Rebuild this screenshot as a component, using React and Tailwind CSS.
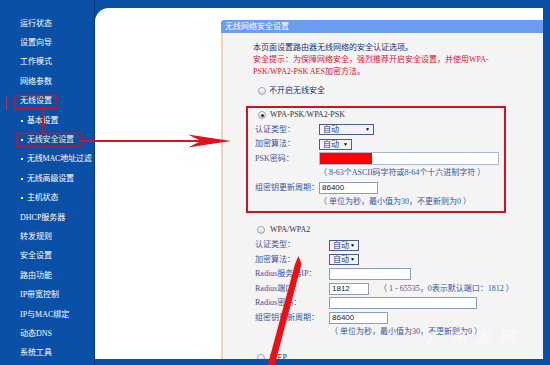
import React from "react";

const side = [
  ["运行状态", 0],
  ["设置向导", 0],
  ["工作模式", 0],
  ["网络参数", 0],
  ["无线设置", 0],
  ["基本设置", 1],
  ["无线安全设置", 2],
  ["无线MAC地址过滤", 1],
  ["无线高级设置", 1],
  ["主机状态", 1],
  ["DHCP服务器", 0],
  ["转发规则", 0],
  ["安全设置", 0],
  ["路由功能", 0],
  ["IP带宽控制", 0],
  ["IP与MAC绑定", 0],
  ["动态DNS", 0],
  ["系统工具", 0],
];

function Radio({ checked }) {
  return (
    <span className="relative w-[8px] h-[8px] rounded-full border border-[#9aa3b0] bg-[linear-gradient(#ffffff,#d6d9de)] shrink-0 flex items-center justify-center">
      {checked && <span className="w-[3px] h-[3px] rounded-full bg-[#333]" />}
    </span>
  );
}

function Sel({ w }) {
  return (
    <div
      className={`h-[11px] ${w} border border-[#4a5c98] bg-[#f2f4fa] flex items-center justify-between pl-[3px] pr-[3px] text-[8px] leading-[9px] text-[#223f8c]`}
    >
      <span>自动</span>
      <span className="text-[5px] text-black">▼</span>
    </div>
  );
}

function Inp({ w, v, children }) {
  return (
    <div
      className={`h-[12px] ${w} bg-white border border-[#8a9cc4] text-[8px] leading-[10px] pl-[2px] text-[#222] font-['Liberation_Sans',sans-serif] flex items-center`}
    >
      {v}
      {children}
    </div>
  );
}

function Row({ label, lw, pl, children }) {
  return (
    <div className={`h-[14.5px] flex items-center ${pl}`}>
      <div className={`${lw} shrink-0 text-[8px] text-[#3a55a0] whitespace-nowrap`}>{label}</div>
      {children}
    </div>
  );
}

const hint = "text-[8px] text-[#3656a0] whitespace-nowrap";

export default function App() {
  return (
    <div className="w-[550px] h-[365px] bg-[#0b50a7] relative overflow-hidden flex font-['Liberation_Serif','Noto_Sans_CJK_SC',serif]">
      <div className="w-[94px] shrink-0 pt-[14px] flex flex-col">
        {side.map(([t, lvl]) => (
          <div key={t} className="h-[19.4px] flex items-center text-[8px] whitespace-nowrap">
            {lvl === 0 ? (
              <span className="pl-[20px] text-white">{t}</span>
            ) : (
              <>
                <span className="ml-[21px] w-[2px] h-[2px] bg-white mr-[4px]" />
                <span className={`${lvl === 2 ? "text-[#f6f1c4]" : "text-white"} tracking-[-0.2px]`}>{t}</span>
              </>
            )}
          </div>
        ))}
      </div>
      <div className="w-[1px] shrink-0 bg-[#063a80]" />
      <div className="flex-1 mt-[8px] mb-[6px] mr-[7px] bg-white rounded-tl-[14px] overflow-hidden pl-[126px] pt-[12px] flex flex-col">
        <div className="h-[13px] shrink-0 bg-[#6a9cf1] rounded-tl-[3px] text-[8px] leading-[13px] text-white pl-[4px]">
          无线网络安全设置
        </div>
        <div className="flex-1 bg-[#f4f4f4] border-l-[2px] border-[#f1d3b9] pl-[23px] pt-[9px] flex flex-col">
          <p className="ml-[7px] leading-[12px] text-[8px] text-[#1d2f6f] whitespace-nowrap">
            本页面设置路由器无线网络的安全认证选项。
            <br />
            <span className="text-[#e0112b]">
              安全提示：为保障网络安全，强烈推荐开启安全设置，并使用WPA-
              <br />
              PSK/WPA2-PSK AES加密方法。
            </span>
          </p>
          <div className="mt-[7px] h-[12px] flex items-center pl-[12px] gap-[3px] text-[8px] text-[#1d2f6f]">
            <Radio />
            <span>不开启无线安全</span>
          </div>

          <div className="mt-[9px] w-[260px] h-[107px] shrink-0 border-2 border-[#d0141e] flex flex-col">
            <div className="h-[14.5px] flex items-center pl-[10px] gap-[4px] text-[8px] text-[#333]">
              <Radio checked />
              <span>WPA-PSK/WPA2-PSK</span>
            </div>
            <Row label="认证类型：" lw="w-[64px]" pl="pl-[7px]">
              <Sel w="w-[55px]" />
            </Row>
            <Row label="加密算法：" lw="w-[64px]" pl="pl-[7px]">
              <Sel w="w-[33px]" />
            </Row>
            <Row label="PSK密码：" lw="w-[64px]" pl="pl-[7px]">
              <div className="h-[13px] w-[180px] bg-white border border-[#a9b7d4] flex">
                <div className="w-[52px] h-full bg-[#ff0000]" />
              </div>
            </Row>
            <Row label="" lw="w-[64px]" pl="pl-[7px]">
              <span className={hint}>（ 8-63个ASCII码字符或8-64个十六进制字符 ）</span>
            </Row>
            <Row label="组密钥更新周期：" lw="w-[64px]" pl="pl-[7px]">
              <Inp w="w-[59px]" v="86400" />
            </Row>
            <Row label="" lw="w-[64px]" pl="pl-[7px]">
              <span className={hint}>（ 单位为秒，最小值为30，不更新则为0 ）</span>
            </Row>
          </div>

          <div className="mt-[9px] h-[16px] flex items-center pl-[11px] gap-[5px] text-[8px] text-[#333]">
            <Radio />
            <span>WPA/WPA2</span>
          </div>
          <Row label="认证类型：" lw="w-[74px]" pl="pl-[9px]">
            <Sel w="w-[30px]" />
          </Row>
          <Row label="加密算法：" lw="w-[74px]" pl="pl-[9px]">
            <Sel w="w-[30px]" />
          </Row>
          <Row label="Radius服务器IP：" lw="w-[74px]" pl="pl-[9px]">
            <Inp w="w-[82px]" v="" />
          </Row>
          <Row label="Radius端口：" lw="w-[74px]" pl="pl-[9px]">
            <Inp w="w-[40px]" v="1812" />
            <span className={`${hint} ml-[10px]`}>（ 1 - 65535，0表示默认端口：1812 ）</span>
          </Row>
          <Row label="Radius密码：" lw="w-[74px]" pl="pl-[9px]">
            <Inp w="w-[148px]" v="" />
          </Row>
          <Row label="组密钥更新周期：" lw="w-[74px]" pl="pl-[9px]">
            <Inp w="w-[59px]" v="86400" />
          </Row>
          <Row label="" lw="w-[75px]" pl="pl-[9px]">
            <span className={hint}>（ 单位为秒，最小值为30，不更新则为0 ）</span>
          </Row>
          <div className="mt-[12px] h-[12px] flex items-center pl-[11px] gap-[5px] text-[8px] text-[#333]">
            <Radio />
            <span>WEP</span>
          </div>
        </div>
      </div>

      <svg className="absolute inset-0 pointer-events-none" width="550" height="365" viewBox="0 0 550 365">
        <line x1="6.5" y1="97" x2="6.5" y2="110" stroke="#c23548" strokeWidth="1" />
        <rect x="15" y="95.5" width="41" height="13" fill="none" stroke="#d0101c" strokeWidth="1.5" />
        <rect x="17" y="133.5" width="64" height="13.5" fill="none" stroke="#d0101c" strokeWidth="1.5" />
        <line x1="43" y1="109" x2="43" y2="133" stroke="#d0101c" strokeWidth="1.5" />
        <polygon points="40,123 46,123 43,129" fill="#d0101c" />
        <line x1="81" y1="141" x2="205" y2="141" stroke="#e0101c" strokeWidth="2" />
        <polygon points="231,141 188,134.5 201,141 188,147.5" fill="#e0101c" />
        <polygon points="298.5,256 301.5,264 274.5,366 267.5,366 295,264" fill="#ee0f14" />
      </svg>
      <div className="absolute left-[427px] top-[327px] text-[16px] leading-[18px] tracking-[8px] text-white/75 italic font-['Noto_Sans_CJK_SC',sans-serif]">
        广东龙网
      </div>
    </div>
  );
}
